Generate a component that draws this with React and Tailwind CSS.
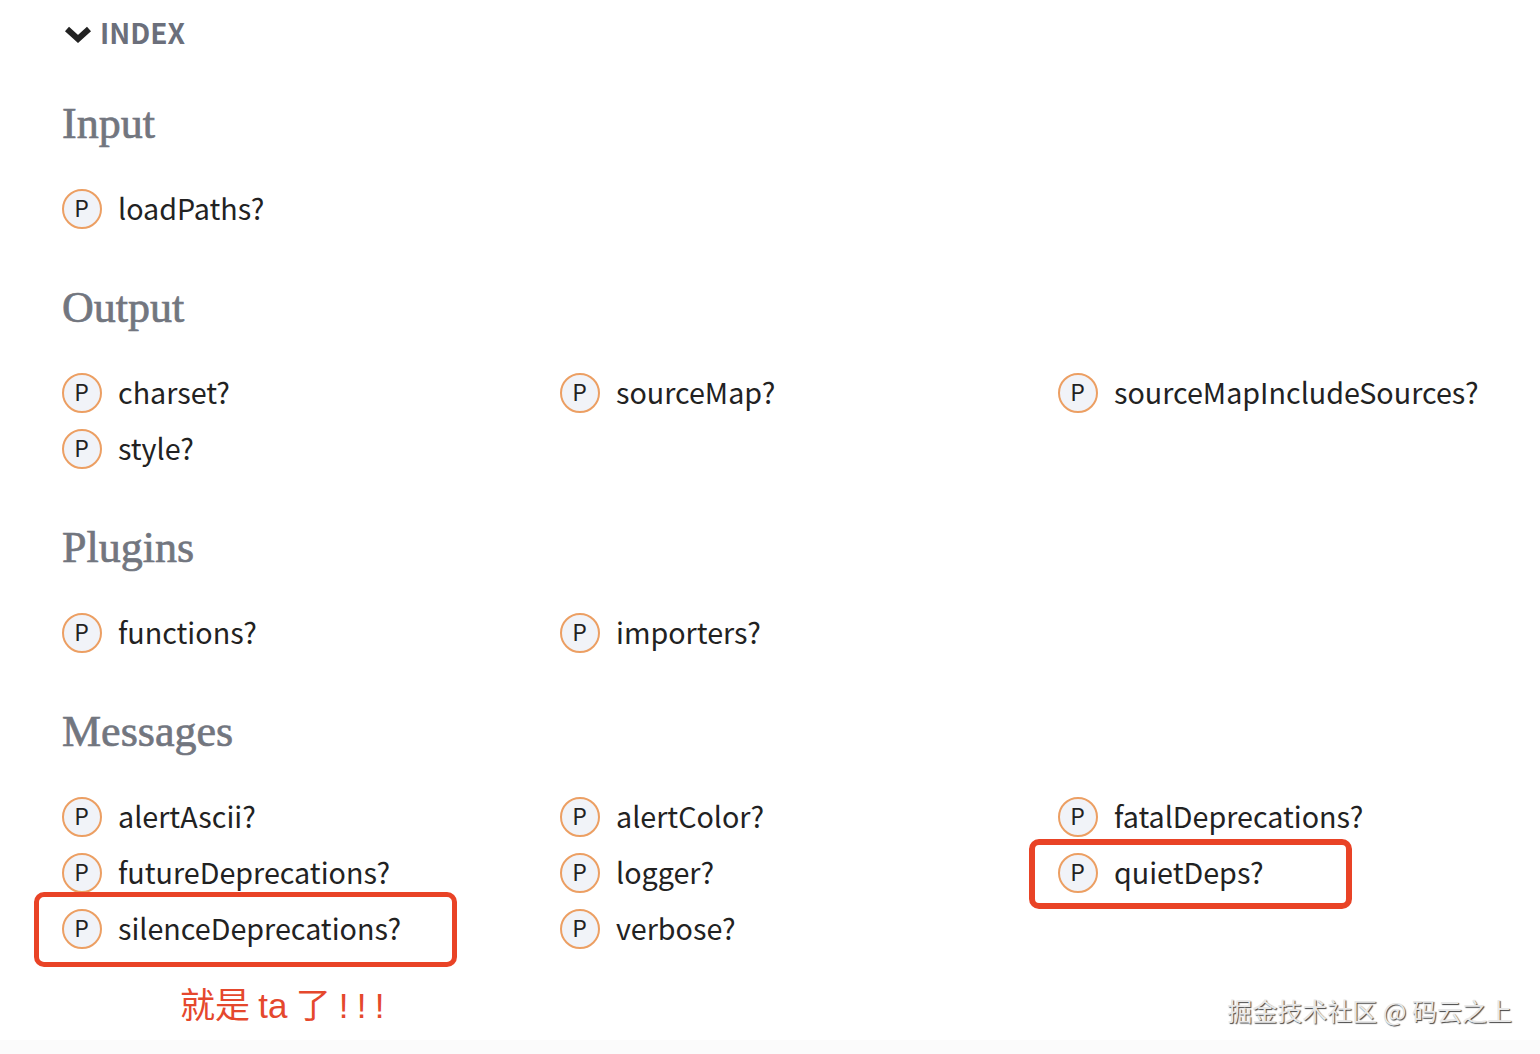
import React from 'react';

const sections = [
    { title: 'Input', items: ['loadPaths?'] },
    { title: 'Output', items: ['charset?', 'sourceMap?', 'sourceMapIncludeSources?', 'style?'] },
    { title: 'Plugins', items: ['functions?', 'importers?'] },
    {
        title: 'Messages',
        items: [
            'alertAscii?', 'alertColor?', 'fatalDeprecations?',
            'futureDeprecations?', 'logger?', 'quietDeps?',
            'silenceDeprecations?', 'verbose?',
        ],
    },
];

const Member = ({ name }) => (
    <div className="h-[56px] flex items-center">
        <span className="w-[40px] h-[40px] rounded-full border-[2.5px] border-[#ec9f63] bg-[#f1f3f8] flex items-center justify-center pb-[4px] pr-[1px] text-[23px] leading-none text-[#222] shrink-0">
            P
        </span>
        <span className="ml-[16px] pb-[1px] text-[28.7px] leading-none text-[#222] whitespace-nowrap">{name}</span>
    </div>
);

const App = () => {
    return (
        <div className="relative w-[1540px] h-[1054px] overflow-hidden bg-white pl-[62px] font-['Noto_Sans_CJK_SC',sans-serif]">
            <div className="h-[68px] flex items-center">
                <svg width="32" height="20" viewBox="0 0 32 20">
                    <path d="M5 5l11 10L27 5" fill="none" stroke="#222" strokeWidth="6" />
                </svg>
                <span className="ml-[6px] pb-[4px] text-[28px] font-bold leading-none text-[#6b6f7b]">INDEX</span>
            </div>

            <div className="flex flex-col gap-[45px] mt-[30px]">
                {sections.map((section) => (
                    <div key={section.title} className="flex flex-col gap-[31px]">
                        <h2 className="h-[52px] flex items-center font-['Liberation_Serif',serif] text-[44px] leading-none font-normal [-webkit-text-stroke:0.7px_#72767f] text-[#72767f]">
                            {section.title}
                        </h2>
                        <div className="grid grid-cols-[498px_498px_1fr]">
                            {section.items.map((name) => (
                                <Member key={name} name={name} />
                            ))}
                        </div>
                    </div>
                ))}
            </div>

            {/* red annotation boxes */}
            <div className="absolute left-[34px] top-[892px] w-[423px] h-[75px] border-[5.5px] border-[#e94326] rounded-[10px]" />
            <div className="absolute left-[1029px] top-[839px] w-[323px] h-[70px] border-[6px] border-[#e94326] rounded-[10px]" />
            <div className="absolute left-[180px] top-[982px] text-[35px] leading-[48px] text-[#e5482d] whitespace-pre [word-spacing:-1.5px] font-['Liberation_Sans','Noto_Sans_CJK_SC',sans-serif]">
                就是 ta 了 ! ! !
            </div>

            {/* watermark */}
            <div className="absolute right-[28px] top-[992px] text-[25px] leading-[36px] text-[#e8e8e8] whitespace-pre [text-shadow:1px_1px_1px_#444]">
                掘金技术社区 @ 码云之上
            </div>
            <div className="absolute left-0 right-0 bottom-0 h-[14px] bg-[#fbfbfb]" />
        </div>
    );
};

export default App;
